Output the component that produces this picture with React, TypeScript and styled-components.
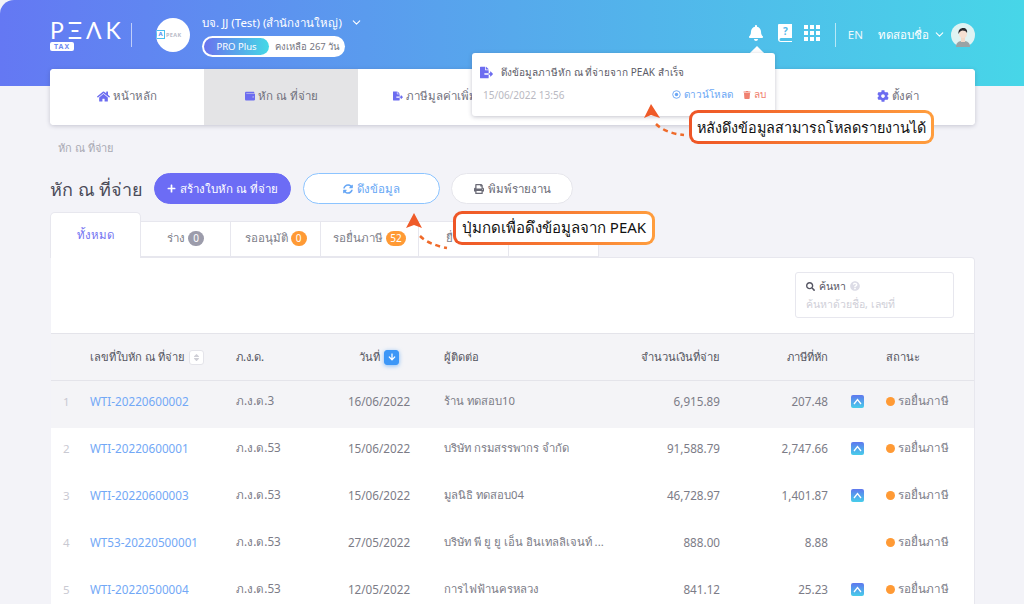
import styled, { createGlobalStyle } from 'styled-components';
import {
  FaArrowDown,
  FaBell,
  FaCog,
  FaFileExport,
  FaHome,
  FaPlus,
  FaPrint,
  FaQuestionCircle,
  FaSearch,
  FaSort,
  FaSyncAlt,
  FaTrash,
  FaWallet,
} from 'react-icons/fa';
import { FiChevronDown } from 'react-icons/fi';

const GlobalStyle = createGlobalStyle`
  html, body { margin: 0; padding: 0; background: #fff; }
  * { box-sizing: border-box; }
  body { font-family: "Noto Sans", "Inter", "DejaVu Sans", sans-serif; }
`;

const Page = styled.div`
  position: relative;
  width: 1024px;
  height: 604px;
  overflow: hidden;
  background: #f3f3f8;
  color: #6f6f7a;
  font-size: 12px;
`;

const Header = styled.header`
  height: 86px;
  padding: 0 49px 17px 50px;
  display: flex;
  align-items: center;
  border-top-left-radius: 14px;
  background: linear-gradient(90deg, #6478f3 0%, #56a9ec 50%, #47d6e8 100%);
  color: #fff;
`;

const Logo = styled.div`
  width: 70px;
  display: flex;
  flex-direction: column;
  align-items: flex-start;
`;

const LogoWord = styled.div`
  font-family: "Lato", sans-serif;
  font-weight: 400;
  font-size: 23px;
  line-height: 22px;
  letter-spacing: 4px;
  white-space: nowrap;
`;

const LogoTag = styled.div`
  margin-top: 1px;
  padding: 0 4px;
  border-radius: 2px;
  background: #fff;
  color: #6f8df2;
  font-size: 7px;
  line-height: 9px;
  font-weight: 700;
  letter-spacing: 1px;
`;

const VLine = styled.div<{ $left: number }>`
  width: 1px;
  height: 24px;
  margin-left: ${(p) => p.$left}px;
  background: rgba(255, 255, 255, 0.6);
`;

const CompanyLogo = styled.div`
  width: 34px;
  height: 34px;
  margin: 0 12px 0 24px;
  border-radius: 50%;
  background: #fff;
  display: flex;
  align-items: center;
  gap: 1px;
  color: #b9bcc8;
  font-size: 5.5px;
  font-weight: 700;
  letter-spacing: 0.4px;
  white-space: nowrap;
  overflow: hidden;
`;

const CompanyMark = styled.span`
  flex: none;
  width: 9px;
  height: 9px;
  border: 1.5px solid #4cc0ee;
  color: #4c8ef0;
  font-size: 6px;
  line-height: 6px;
  text-align: center;
  letter-spacing: 0;
`;

const Company = styled.div`
  display: flex;
  flex-direction: column;
  gap: 5px;
`;

const CompanyName = styled.div`
  display: flex;
  align-items: center;
  gap: 8px;
  padding-top: 1px;
  font-size: 11.5px;
  line-height: 17px;
  white-space: nowrap;
`;

const PlanPill = styled.div`
  width: 143px;
  height: 21px;
  padding: 2px;
  border-radius: 11px;
  background: #fff;
  display: flex;
  align-items: center;
  color: #75757f;
  font-size: 9.5px;
  white-space: nowrap;
`;

const PlanName = styled.div`
  width: 65px;
  height: 17px;
  margin-right: 6px;
  border-radius: 9px;
  background: linear-gradient(90deg, #6a72ee, #45d9e6);
  color: #fff;
  font-size: 9.5px;
  line-height: 17px;
  text-align: center;
`;

const HeaderRight = styled.div`
  margin-left: auto;
  display: flex;
  align-items: center;
`;

const IconSlot = styled.div<{ $w: number }>`
  width: ${(p) => p.$w}px;
  margin-bottom: 4px;
  display: flex;
  justify-content: center;
  align-items: center;
`;

const Dots = styled.div`
  display: grid;
  grid-template-columns: repeat(3, 4px);
  gap: 2px;
`;

const Dot = styled.span`
  width: 4px;
  height: 4px;
  background: #fff;
`;

const Lang = styled.span`
  margin: 0 15px 0 12px;
  font-size: 11.5px;
  opacity: 0.9;
`;

const UserName = styled.span`
  font-size: 11.5px;
  margin-right: 4px;
`;

const UserChevron = styled(FiChevronDown)`
  margin-right: 5px;
`;

const Nav = styled.nav`
  height: 56px;
  margin: -17px 49px 0 50px;
  padding-bottom: 0;
  position: relative;
  display: grid;
  grid-template-columns: repeat(6, 1fr);
  border-radius: 4px;
  overflow: hidden;
  background: #fff;
  box-shadow: 0 1px 4px rgba(60, 60, 90, 0.25);
`;

const NavItem = styled.div<{ $active?: boolean }>`
  padding-bottom: 2px;
  display: flex;
  align-items: center;
  justify-content: center;
  gap: 3px;
  background: ${(p) => (p.$active ? '#e4e4e6' : '#fff')};
  color: #70707c;
  font-size: 11.5px;
  svg { color: #6c6cf0; }
`;

const Main = styled.main`
  padding: 14px 49px 0 50px;
`;

const Breadcrumb = styled.div`
  margin-left: 8px;
  height: 16px;
  line-height: 18px;
  font-size: 11px;
  color: #a9a9b3;
`;

const TitleRow = styled.div`
  margin-top: 18px;
  display: flex;
  align-items: center;
  height: 31px;
`;

const Title = styled.h1`
  margin: 0 12px 0 0;
  width: 92px;
  font-size: 18px;
  line-height: 26px;
  font-weight: 500;
  color: #4b4b58;
  white-space: nowrap;
`;

const Button = styled.button<{ $kind: 'primary' | 'outline' | 'plain'; $w: number }>`
  width: ${(p) => p.$w}px;
  height: 31px;
  margin-right: ${(p) => (p.$kind === 'outline' ? 11 : 12)}px;
  padding: 0;
  border-radius: 16px;
  display: flex;
  align-items: center;
  justify-content: center;
  gap: 4px;
  font: inherit;
  font-size: 11.5px;
  white-space: nowrap;
  border: 1px solid
    ${(p) => (p.$kind === 'primary' ? '#6c6cf5' : p.$kind === 'outline' ? '#8cc4ff' : '#e6e6ec')};
  background: ${(p) => (p.$kind === 'primary' ? '#6c6cf5' : '#fff')};
  color: ${(p) => (p.$kind === 'primary' ? '#fff' : p.$kind === 'outline' ? '#66a6f5' : '#6a6a76')};
`;

const Tabs = styled.div`
  margin-top: 8px;
  height: 45px;
  display: flex;
  align-items: flex-end;
`;

const Tab = styled.div<{ $active?: boolean; $w: number }>`
  width: ${(p) => p.$w}px;
  height: ${(p) => (p.$active ? 46 : 36)}px;
  margin-bottom: ${(p) => (p.$active ? -1 : 0)}px;
  position: relative;
  display: flex;
  align-items: center;
  justify-content: center;
  gap: 3px;
  padding-bottom: 2px;
  border: 1px solid #e7e7ee;
  border-left-width: ${(p) => (p.$active ? 1 : 0)}px;
  border-bottom: ${(p) => (p.$active ? '0' : '1px solid #e7e7ee')};
  border-radius: ${(p) => (p.$active ? '5px 5px 0 0' : '0')};
  background: #fff;
  color: ${(p) => (p.$active ? '#7373f2' : '#7d7d88')};
  font-size: 11.5px;
  font-weight: ${(p) => (p.$active ? 500 : 400)};
`;

const Count = styled.span<{ $color: string }>`
  min-width: 16px;
  height: 15px;
  padding: 0 4px;
  border-radius: 8px;
  background: ${(p) => p.$color};
  color: #fff;
  font-size: 10px;
  line-height: 15px;
  text-align: center;
`;

const Card = styled.section`
  margin-left: 1px;
  background: #fff;
  border: 1px solid #e7e7ee;
  border-left: 0;
  border-radius: 0 4px 0 0;
`;

const SearchBar = styled.div`
  height: 75px;
  padding: 14px 20px 0 0;
  display: flex;
  justify-content: flex-end;
`;

const SearchBox = styled.div`
  width: 159px;
  height: 46px;
  padding: 5px 10px;
  border: 1px solid #e7e7ee;
  border-radius: 3px;
`;

const SearchLabel = styled.div`
  display: flex;
  align-items: center;
  gap: 4px;
  font-size: 10.5px;
  line-height: 16px;
  color: #565663;
  svg:last-child { color: #dcdce6; }
`;

const SearchHint = styled.div`
  margin-top: 2px;
  font-size: 10.5px;
  line-height: 16px;
  color: #cfcfd8;
`;

const Row = styled.div<{ $head?: boolean; $shaded?: boolean }>`
  height: ${(p) => (p.$head ? 48 : 47)}px;
  padding-bottom: ${(p) => (p.$head ? 0 : 7)}px;
  display: grid;
  grid-template-columns: 39px 146px 90px 118px 160px 116px 108px 58px 1fr;
  align-items: center;
  background: ${(p) => (p.$head || p.$shaded ? '#f4f4f7' : '#fff')};
  border-top: ${(p) => (p.$head ? '1px solid #e4e4ea' : '0')};
  border-bottom: ${(p) => (p.$head ? '1px solid #e4e4ea' : '0')};
  color: ${(p) => (p.$head ? '#55555f' : '#7c7c87')};
  font-size: ${(p) => (p.$head ? 11.2 : 11.7)}px;
  font-weight: ${(p) => (p.$head ? 500 : 400)};
`;

const Num = styled.div`
  padding-left: 12px;
  color: #c9c9d2;
  font-size: 11.5px;
`;

const DocCell = styled.div`
  display: flex;
  align-items: center;
  gap: 4px;
`;

const DocLink = styled.a`
  color: #72a8f6;
`;

const SortChip = styled.span<{ $on?: boolean }>`
  width: 15px;
  height: 15px;
  border-radius: 3px;
  display: inline-flex;
  align-items: center;
  justify-content: center;
  color: ${(p) => (p.$on ? '#fff' : '#cfcfd6')};
  background: ${(p) => (p.$on ? '#3d97f7' : '#fff')};
  border: 1px solid ${(p) => (p.$on ? '#3d97f7' : '#e4e4ea')};
  box-shadow: ${(p) => (p.$on ? '0 1px 4px rgba(61,151,247,.6)' : 'none')};
`;

const DateCell = styled.div`
  padding-right: 12px;
  display: flex;
  justify-content: center;
  align-items: center;
  gap: 4px;
`;

const Contact = styled.div`
  font-size: 11.3px;
  white-space: nowrap;
`;

const Money = styled.div`
  text-align: right;
`;

const SourceCell = styled.div`
  display: flex;
  justify-content: center;
`;

const Status = styled.div`
  display: flex;
  align-items: center;
  gap: 3px;
  white-space: nowrap;
`;

const StatusDot = styled.span`
  width: 9px;
  height: 9px;
  border-radius: 50%;
  background: #ff9a35;
`;

/* things that float over the page */
const NotiNub = styled.div`
  position: absolute;
  left: 752px;
  top: 48px;
  width: 10px;
  height: 10px;
  transform: rotate(45deg);
  background: #fff;
`;

const Noti = styled.div`
  position: absolute;
  left: 472px;
  top: 53px;
  width: 303px;
  height: 63px;
  padding: 11px 9px 0 8px;
  border-radius: 3px;
  background: #fff;
  box-shadow: 0 1px 4px rgba(60, 60, 90, 0.3);
`;

const NotiTitle = styled.div`
  display: flex;
  align-items: center;
  gap: 8px;
  font-size: 10px;
  line-height: 16px;
  color: #5c5c68;
  svg { color: #6c6cf0; }
`;

const NotiFoot = styled.div`
  margin-top: 7px;
  padding-left: 3px;
  display: flex;
  align-items: center;
  justify-content: space-between;
  font-size: 10px;
  color: #b9b9c2;
`;

const NotiActions = styled.div`
  display: flex;
  align-items: center;
  gap: 10px;
`;

const NotiAction = styled.span<{ $color: string }>`
  display: inline-flex;
  align-items: center;
  gap: 3px;
  color: ${(p) => p.$color};
`;

const Callout = styled.div<{ $x: number; $y: number; $w: number; $size: number }>`
  position: absolute;
  left: ${(p) => p.$x}px;
  top: ${(p) => p.$y}px;
  width: ${(p) => p.$w}px;
  height: 34px;
  border: 3px solid transparent;
  border-radius: 9px;
  background:
    linear-gradient(#fff, #fff) padding-box,
    linear-gradient(90deg, #ee5526, #ff9d3d) border-box;
  display: flex;
  align-items: center;
  justify-content: center;
  color: #111;
  font-size: ${(p) => p.$size}px;
  white-space: nowrap;
`;

const Pointer = styled.svg`
  position: absolute;
  left: 0;
  top: 0;
  pointer-events: none;
`;

const rows = [
  ['1', 'WTI-20220600002', 'ภ.ง.ด.3', '16/06/2022', 'ร้าน ทดสอบ10', '6,915.89', '207.48', true],
  ['2', 'WTI-20220600001', 'ภ.ง.ด.53', '15/06/2022', 'บริษัท กรมสรรพากร จำกัด', '91,588.79', '2,747.66', true],
  ['3', 'WTI-20220600003', 'ภ.ง.ด.53', '15/06/2022', 'มูลนิธิ ทดสอบ04', '46,728.97', '1,401.87', true],
  ['4', 'WT53-20220500001', 'ภ.ง.ด.53', '27/05/2022', 'บริษัท พี ยู ยู เอ็น อินเทลลิเจนท์ ...', '888.00', '8.88', false],
  ['5', 'WTI-20220500004', 'ภ.ง.ด.53', '12/05/2022', 'การไฟฟ้านครหลวง', '841.12', '25.23', true],
] as const;

const PeakBadge = () => (
  <svg width="13" height="13" viewBox="0 0 13 13">
    <defs>
      <linearGradient id="peakBadge" x1="0" y1="0" x2="0" y2="1">
        <stop offset="0" stopColor="#5f78ee" />
        <stop offset="1" stopColor="#47cdea" />
      </linearGradient>
    </defs>
    <rect width="13" height="13" rx="2" fill="url(#peakBadge)" />
    <path d="M3 9 L6.5 4.5 L10 9" fill="none" stroke="#fff" strokeWidth="1.3" />
  </svg>
);

const HelpBook = () => (
  <svg width="14" height="18" viewBox="0 0 14 18">
    <path d="M1 0h13v14H3a1.500 1.500 0 0 0 0 3h11v1H3a3 3 0 0 1-3-3V1a1 1 0 0 1 1-1z" fill="#fff" />
    <text x="7.5" y="11" fontSize="10" fontWeight="700" textAnchor="middle" fill="#52b8ea">?</text>
  </svg>
);

const TargetIcon = () => (
  <svg width="9" height="9" viewBox="0 0 9 9">
    <circle cx="4.500" cy="4.500" r="3.800" fill="none" stroke="currentColor" strokeWidth="0.9" />
    <circle cx="4.500" cy="4.500" r="1.700" fill="currentColor" />
  </svg>
);

const Avatar = () => (
  <svg width="24" height="24" viewBox="0 0 24 24">
    <circle cx="12" cy="12" r="12" fill="#dff3f3" />
    <path d="M5 24c0-5 3-6 7-6s7 1 7 6z" fill="#9aa3a5" />
    <rect x="10" y="13" width="4" height="6" fill="#f3d9c8" />
    <circle cx="12" cy="11" r="4" fill="#f6e0d2" />
    <path d="M7.500 11c-.6-4 2-6 4.700-6s4.600 2 3.800 5c-1-2-2.500-2.600-4.400-2.600-1.200 0-2.800.8-4.100 3.600z" fill="#2b2b30" />
  </svg>
);

export default function App() {
  return (
    <Page>
      <GlobalStyle />
      <Header>
        <Logo>
          <LogoWord>PΞΛK</LogoWord>
          <LogoTag>TAX</LogoTag>
        </Logo>
        <VLine $left={11} />
        <CompanyLogo>
          <CompanyMark>A</CompanyMark>
          PEAK
        </CompanyLogo>
        <Company>
          <CompanyName>
            บจ. JJ (Test) (สำนักงานใหญ่)
            <FiChevronDown size={13} />
          </CompanyName>
          <PlanPill>
            <PlanName>PRO Plus</PlanName>
            คงเหลือ 267 วัน
          </PlanPill>
        </Company>
        <HeaderRight>
          <IconSlot $w={29}><FaBell size={16} /></IconSlot>
          <IconSlot $w={29}><HelpBook /></IconSlot>
          <IconSlot $w={25}>
            <Dots>
              {Array.from({ length: 9 }).map((_, i) => <Dot key={i} />)}
            </Dots>
          </IconSlot>
          <VLine $left={10} />
          <Lang>EN</Lang>
          <UserName>ทดสอบชื่อ</UserName>
          <UserChevron size={13} />
          <Avatar />
        </HeaderRight>
      </Header>

      <Nav>
        <NavItem><FaHome size={13} />หน้าหลัก</NavItem>
        <NavItem $active><FaWallet size={10} />หัก ณ ที่จ่าย</NavItem>
        <NavItem><FaFileExport size={10} />ภาษีมูลค่าเพิ่ม</NavItem>
        <NavItem>รายงาน</NavItem>
        <NavItem>ยื่นภาษี</NavItem>
        <NavItem><FaCog size={12} />ตั้งค่า</NavItem>
      </Nav>

      <Main>
        <Breadcrumb>หัก ณ ที่จ่าย</Breadcrumb>
        <TitleRow>
          <Title>หัก ณ ที่จ่าย</Title>
          <Button $kind="primary" $w={137}><FaPlus size={9} />สร้างใบหัก ณ ที่จ่าย</Button>
          <Button $kind="outline" $w={137}><FaSyncAlt size={10} />ดึงข้อมูล</Button>
          <Button $kind="plain" $w={122}><FaPrint size={10} />พิมพ์รายงาน</Button>
        </TitleRow>

        <Tabs>
          <Tab $active $w={91}>ทั้งหมด</Tab>
          <Tab $w={90}>ร่าง <Count $color="#9c9cab">0</Count></Tab>
          <Tab $w={90}>รออนุมัติ <Count $color="#ff9a35">0</Count></Tab>
          <Tab $w={98}>รอยื่นภาษี <Count $color="#ff9a35">52</Count></Tab>
          <Tab $w={90}>ยื่นแล้ว</Tab>
          <Tab $w={90}>ยกเลิก</Tab>
        </Tabs>

        <Card>
          <SearchBar>
            <SearchBox>
              <SearchLabel>
                <FaSearch size={9} />
                ค้นหา
                <FaQuestionCircle size={10} />
              </SearchLabel>
              <SearchHint>ค้นหาด้วยชื่อ, เลขที่</SearchHint>
            </SearchBox>
          </SearchBar>

          <Row $head>
            <div />
            <DocCell>เลขที่ใบหัก ณ ที่จ่าย <SortChip><FaSort size={9} /></SortChip></DocCell>
            <div>ภ.ง.ด.</div>
            <DateCell>วันที่ <SortChip $on><FaArrowDown size={8} /></SortChip></DateCell>
            <div>ผู้ติดต่อ</div>
            <Money>จำนวนเงินที่จ่าย</Money>
            <Money>ภาษีที่หัก</Money>
            <div />
            <div>สถานะ</div>
          </Row>

          {rows.map(([n, doc, form, date, contact, amount, tax, fromPeak], i) => (
            <Row key={n} $shaded={i === 0}>
              <Num>{n}</Num>
              <div><DocLink>{doc}</DocLink></div>
              <div>{form}</div>
              <DateCell>{date}</DateCell>
              <Contact>{contact}</Contact>
              <Money>{amount}</Money>
              <Money>{tax}</Money>
              <SourceCell>{fromPeak && <PeakBadge />}</SourceCell>
              <Status><StatusDot />รอยื่นภาษี</Status>
            </Row>
          ))}
        </Card>
      </Main>

      <NotiNub />
      <Noti>
        <NotiTitle>
          <FaFileExport size={13} />
          ดึงข้อมูลภาษีหัก ณ ที่จ่ายจาก PEAK สำเร็จ
        </NotiTitle>
        <NotiFoot>
          15/06/2022 13:56
          <NotiActions>
            <NotiAction $color="#6aa6f5"><TargetIcon />ดาวน์โหลด</NotiAction>
            <NotiAction $color="#f0806f"><FaTrash size={8} />ลบ</NotiAction>
          </NotiActions>
        </NotiFoot>
      </Noti>

      <Pointer width="1024" height="604" viewBox="0 0 1024 604">
        <path d="M651 104 L660 118 L651 115 L644 118 Z" fill="#ef5a28" />
        <path d="M656 124 C662 130 672 134 684 135" fill="none" stroke="#ef6a2a" strokeWidth="2.500" strokeDasharray="5 4" />
        <path d="M414 213 L422 228 L414 225 L406 228 Z" fill="#ef5a28" />
        <path d="M420 236 C426 242 436 246 447 248" fill="none" stroke="#ef6a2a" strokeWidth="2.500" strokeDasharray="5 4" />
      </Pointer>
      <Callout $x={689} $y={110} $w={245} $size={14.4}>หลังดึงข้อมูลสามารถโหลดรายงานได้</Callout>
      <Callout $x={453} $y={211} $w={202} $size={15}>ปุ่มกดเพื่อดึงข้อมูลจาก PEAK</Callout>
    </Page>
  );
}
